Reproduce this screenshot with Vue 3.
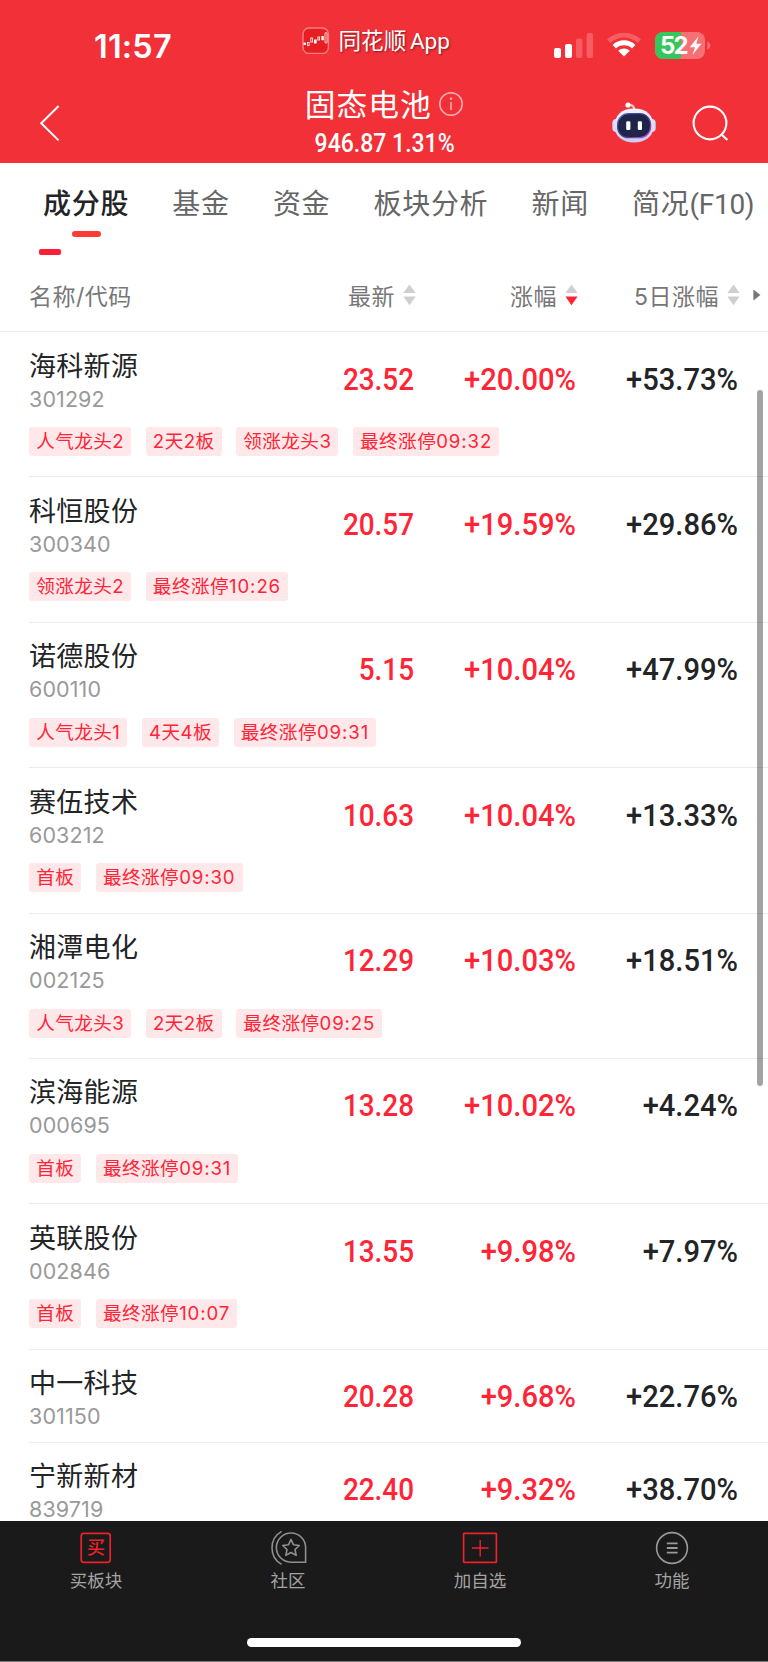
<template>
  <div class="app">
    <header class="header">
      <div class="status-bar">
        <span class="time">11:57</span>
        <div class="source-app">
          <svg class="app-icon" width="28" height="28" viewBox="0 0 28 28">
            <rect x="1" y="1" width="25.4" height="25.4" rx="6" fill="#e51f22" stroke="#f77e80" stroke-width="1.4" />
            <g fill="#fff">
              <rect x="1.5" y="15.6" width="2.4" height="2.4" />
              <rect x="12" y="12.5" width="2.6" height="4" />
              <rect x="19.4" y="9" width="2.4" height="4.2" />
            </g>
            <g fill="none" stroke="#fff" stroke-width="0.8">
              <rect x="5.4" y="15.4" width="1.8" height="3" />
              <rect x="8.8" y="11" width="1.8" height="4" />
              <rect x="15.8" y="10" width="1.8" height="3" />
              <rect x="23" y="5.6" width="2" height="10.5" rx="1" />
            </g>
          </svg>
          <span class="source-name">同花顺 App</span>
        </div>
        <div class="status-icons">
          <svg width="40" height="28" viewBox="0 0 40 28">
            <rect x="0" y="16" width="7" height="10" rx="2" fill="#fff" />
            <rect x="11" y="12" width="7" height="14" rx="2" fill="#fff" />
            <rect x="22" y="6.5" width="6.4" height="19.5" rx="2" fill="#fff" opacity="0.22" />
            <rect x="32.6" y="1" width="6.4" height="25" rx="2" fill="#fff" opacity="0.22" />
          </svg>
          <svg class="wifi" width="34" height="26" viewBox="0 0 34 26">
            <path d="M0 7.6 A24.5 24.5 0 0 1 34 7.6 L30.6 11 A19.5 19.5 0 0 0 3.4 11 Z" fill="#fff" opacity="0.22" />
            <path d="M5.6 13 A16.3 16.3 0 0 1 28.4 13 L25 16.4 A11.5 11.5 0 0 0 9 16.4 Z" fill="#fff" />
            <path d="M11.2 18.8 A8.4 8.4 0 0 1 22.8 18.8 L17 24.6 Z" fill="#fff" />
          </svg>
          <svg class="battery" width="56" height="28" viewBox="0 0 56 28">
            <defs>
              <clipPath id="battery-body"><rect width="50" height="27" rx="8" /></clipPath>
            </defs>
            <g clip-path="url(#battery-body)">
              <rect width="50" height="27" fill="#f67175" />
              <rect width="26" height="27" fill="#34c759" />
            </g>
            <path d="M52.4 9.6 Q55.4 11 55.4 13.5 T52.4 17.6 Z" fill="#f67175" />
            <text x="5" y="21.8" textLength="28.5" class="battery-text">52</text>
            <path d="M43.5 4.3 L34.8 15.2 H40 L37.6 22.8 L46.4 11.8 H41.2 Z" fill="#fff" />
          </svg>
        </div>
      </div>
      <div class="nav-bar">
        <svg class="back" width="22" height="38" viewBox="0 0 22 38">
          <path d="M19.6 2 L2.2 19.2 L19.6 36.4" fill="none" stroke="#fff" stroke-width="2" />
        </svg>
        <div class="title">
          <div class="title-row">
            <span class="name">固态电池</span>
            <svg width="26" height="26" viewBox="0 0 26 26">
              <circle cx="13" cy="13" r="11.2" fill="none" stroke="#fab0b2" stroke-width="1.5" />
              <circle cx="13" cy="7.8" r="1.2" fill="#fab0b2" />
              <path d="M13 11 V19" stroke="#fab0b2" stroke-width="1.6" />
            </svg>
          </div>
          <div class="quote">946.87 1.31%</div>
        </div>
        <div class="nav-actions">
          <svg width="44" height="42" viewBox="0 0 44 42">
            <defs>
              <linearGradient id="shell" x1="0" y1="0" x2="0" y2="1">
                <stop offset="0" stop-color="#f3f2fd" />
                <stop offset="1" stop-color="#cccbf2" />
              </linearGradient>
              <linearGradient id="ring" x1="0" y1="0" x2="1" y2="1">
                <stop offset="0" stop-color="#4a63c8" />
                <stop offset="0.5" stop-color="#39357c" />
                <stop offset="1" stop-color="#c653e6" />
              </linearGradient>
            </defs>
            <path d="M16.5 2.6 Q22 2.6 22.4 8" fill="none" stroke="#f7bfcb" stroke-width="2.2" />
            <circle cx="16" cy="3" r="2.6" fill="#fff" />
            <rect x="0.3" y="17" width="8" height="13" rx="4" fill="#d5daf6" />
            <rect x="35.7" y="17" width="8" height="13" rx="4" fill="#d5daf6" />
            <path d="M22 6.6 C35 6.6 41.5 14 41.5 24 C41.5 35 33 40.4 22 40.4 C11 40.4 2.5 35 2.5 24 C2.5 14 9 6.6 22 6.6 Z" fill="url(#shell)" />
            <rect x="5.6" y="11.7" width="33" height="24" rx="11" fill="#1f2548" stroke="url(#ring)" stroke-width="1.3" />
            <rect x="14.2" y="19.2" width="4.2" height="8.8" rx="1.3" fill="#fff" />
            <rect x="25.8" y="19.2" width="4.2" height="8.8" rx="1.3" fill="#fff" />
          </svg>
          <svg width="38" height="38" viewBox="0 0 38 38">
            <circle cx="18" cy="18" r="16.4" fill="none" stroke="#fff" stroke-width="2.1" />
            <path d="M29 29 L35.4 35" stroke="#fff" stroke-width="2.3" />
          </svg>
        </div>
      </div>
    </header>

    <nav class="tabs">
      <span v-for="(tab, index) in tabs" :key="tab.label" class="tab" :class="{ active: index === 0 }">
        {{ tab.label }}<span v-if="tab.suffix" class="suffix">{{ tab.suffix }}</span>
      </span>
    </nav>
    <div class="sub-indicator"></div>

    <div class="table-head">
      <span class="head-name">名称/代码</span>
      <div v-for="col in columns" :key="col.label" class="head-cell">
        <span>{{ col.label }}</span>
        <svg width="13" height="22" viewBox="0 0 13 22">
          <path d="M6.5 0.6 L12.6 9 H0.4 Z" fill="#cfcfcf" />
          <path d="M6.5 21.2 L12.6 12.6 H0.4 Z" :fill="col.desc ? '#ff2436' : '#cfcfcf'" />
        </svg>
      </div>
      <svg class="more" width="8" height="12" viewBox="0 0 8 12">
        <path d="M0.4 0.6 L7.4 6 L0.4 11.4 Z" fill="#777" />
      </svg>
    </div>

    <main class="list">
      <div v-for="stock in stocks" :key="stock.code" class="row">
        <div class="row-main">
          <div class="stock">
            <div class="stock-name">{{ stock.name }}</div>
            <div class="stock-code">{{ stock.code }}</div>
          </div>
          <div class="num price red">{{ stock.price }}</div>
          <div class="num red">{{ stock.change }}</div>
          <div class="num">{{ stock.change5 }}</div>
        </div>
        <div v-if="stock.tags" class="tags">
          <span v-for="tag in stock.tags" :key="tag" class="tag">{{ tag }}</span>
          <span class="tag">最终涨停<span class="limit-time">{{ stock.limitTime }}</span></span>
        </div>
      </div>
      <div class="scrollbar"></div>
    </main>

    <footer class="footer">
      <div class="footer-items">
        <div class="footer-item">
          <svg width="38" height="36" viewBox="0 0 38 36">
            <rect x="4.2" y="3.4" width="29" height="29" rx="2.6" fill="none" stroke="#ee2128" stroke-width="1.7" />
            <text x="18.9" y="24.4" text-anchor="middle" class="buy-text">买</text>
          </svg>
          <span>买板块</span>
        </div>
        <div class="footer-item">
          <svg width="38" height="36" viewBox="0 0 38 36">
            <g fill="none" stroke="#8f8f8f" stroke-width="1.6">
              <path d="M12.6 1.4 A19 19 0 0 0 12.6 34.4" />
              <path d="M36.6 32.2 H21.8 A14.6 14.6 0 1 1 36.6 17.6 Z" />
              <path d="M22 9.4 L24.5 14.8 L30.3 15.5 L26 19.5 L27.2 25.3 L22 22.5 L16.8 25.3 L18 19.5 L13.7 15.5 L19.5 14.8 Z" stroke-linejoin="round" />
            </g>
          </svg>
          <span>社区</span>
        </div>
        <div class="footer-item">
          <svg width="38" height="36" viewBox="0 0 38 36">
            <g fill="none" stroke="#ee2128" stroke-width="1.7">
              <rect x="2.6" y="3.4" width="32.8" height="29" rx="0.6" />
              <path d="M11 18 H27.4 M19.2 10 V26.4" stroke-width="1.4" />
            </g>
          </svg>
          <span>加自选</span>
        </div>
        <div class="footer-item">
          <svg width="38" height="36" viewBox="0 0 38 36">
            <circle cx="19" cy="18" r="15.4" fill="none" stroke="#9a9a9a" stroke-width="1.6" />
            <path d="M13.8 13.3 H24.6 M13.8 18 H24.6 M13.8 22.7 H24.6" stroke="#9a9a9a" stroke-width="1.8" />
          </svg>
          <span>功能</span>
        </div>
      </div>
      <div class="home-indicator"></div>
    </footer>
  </div>
</template>

<script setup>
const tabs = [
  { label: "成分股" },
  { label: "基金" },
  { label: "资金" },
  { label: "板块分析" },
  { label: "新闻" },
  { label: "简况", suffix: "(F10)" },
];

const columns = [
  { label: "最新", desc: false },
  { label: "涨幅", desc: true },
  { label: "5日涨幅", desc: false },
];

const stocks = [
  {
    name: "海科新源",
    code: "301292",
    price: "23.52",
    change: "+20.00%",
    change5: "+53.73%",
    tags: ["人气龙头2", "2天2板", "领涨龙头3"],
    limitTime: "09:32",
  },
  {
    name: "科恒股份",
    code: "300340",
    price: "20.57",
    change: "+19.59%",
    change5: "+29.86%",
    tags: ["领涨龙头2"],
    limitTime: "10:26",
  },
  {
    name: "诺德股份",
    code: "600110",
    price: "5.15",
    change: "+10.04%",
    change5: "+47.99%",
    tags: ["人气龙头1", "4天4板"],
    limitTime: "09:31",
  },
  {
    name: "赛伍技术",
    code: "603212",
    price: "10.63",
    change: "+10.04%",
    change5: "+13.33%",
    tags: ["首板"],
    limitTime: "09:30",
  },
  {
    name: "湘潭电化",
    code: "002125",
    price: "12.29",
    change: "+10.03%",
    change5: "+18.51%",
    tags: ["人气龙头3", "2天2板"],
    limitTime: "09:25",
  },
  {
    name: "滨海能源",
    code: "000695",
    price: "13.28",
    change: "+10.02%",
    change5: "+4.24%",
    tags: ["首板"],
    limitTime: "09:31",
  },
  {
    name: "英联股份",
    code: "002846",
    price: "13.55",
    change: "+9.98%",
    change5: "+7.97%",
    tags: ["首板"],
    limitTime: "10:07",
  },
  { name: "中一科技", code: "301150", price: "20.28", change: "+9.68%", change5: "+22.76%" },
  { name: "宁新新材", code: "839719", price: "22.40", change: "+9.32%", change5: "+38.70%" },
];
</script>

<style>
body {
  margin: 0;
}
</style>

<style scoped>
.app {
  width: 768px;
  height: 1662px;
  display: flex;
  flex-direction: column;
  overflow: hidden;
  background: #fff;
  color: #222426;
  font-family: Inter, "Noto Sans CJK SC", sans-serif;
  white-space: nowrap;
}

.app svg {
  display: block;
  flex: none;
}

.header {
  height: 163px;
  flex: none;
  background: #f23038;
  color: #fff;
}

.status-bar {
  height: 76px;
  box-sizing: border-box;
  padding: 27px 57px 0 94px;
  display: grid;
  grid-template-columns: 207.5px 1fr auto;
  align-items: start;
}

.time {
  font-size: 32.4px;
  line-height: 39px;
  font-weight: 600;
  letter-spacing: 0.2px;
}

.source-app {
  display: flex;
  align-items: flex-start;
  gap: 9px;
  font-family: Roboto, "Noto Sans CJK SC", sans-serif;
  font-size: 22.6px;
  line-height: 29px;
  text-shadow: 1px 1px 2px rgba(0, 0, 0, 0.45);
}

.source-name {
  word-spacing: -2px;
}

.status-icons {
  display: flex;
  align-items: flex-start;
  padding-top: 5px;
}

.wifi {
  margin-left: 13px;
}

.battery {
  margin-left: 14px;
}

.battery-text {
  fill: #fff;
  font-size: 24px;
  font-weight: 700;
}

.nav-bar {
  height: 87px;
  display: grid;
  grid-template-columns: 1fr auto 1fr;
  padding: 0 38.5px 0 39px;
}

.back {
  margin-top: 28px;
}

.title-row {
  display: flex;
  align-items: center;
  gap: 6px;
  height: 56px;
}

.name {
  font-size: 30.8px;
  letter-spacing: 1px;
  margin-top: -4px;
}

.quote {
  height: 24px;
  line-height: 24px;
  font-family: Roboto, sans-serif;
  font-size: 25px;
  font-weight: 500;
  text-align: center;
  transform: scaleX(0.92);
}

.nav-actions {
  display: flex;
  justify-content: flex-end;
  gap: 36px;
  padding-top: 26px;
}

.nav-actions svg:last-child {
  margin-top: 3px;
}

.tabs {
  flex: none;
  height: 82px;
  display: flex;
  gap: 43.2px;
  padding-left: 43px;
  color: #666;
  font-family: Roboto, "Noto Sans CJK SC", sans-serif;
  font-size: 28px;
  line-height: 83px;
  letter-spacing: 0.7px;
}

.tab.active {
  position: relative;
  color: #222426;
  font-weight: 500;
}

.tab.active::after {
  content: "";
  position: absolute;
  left: 29px;
  top: 68px;
  width: 29px;
  height: 6px;
  border-radius: 3px;
  background: #fd3b33;
}

.suffix {
  letter-spacing: -0.3px;
}

.sub-indicator {
  flex: none;
  width: 22px;
  height: 6px;
  margin: 4px 0 0 38.5px;
  border-radius: 2px;
  background: #ff1f35;
}

.table-head {
  flex: none;
  height: 72px;
  padding: 4px 7px 0 29px;
  display: grid;
  grid-template-columns: 1fr 162px 162px 162px 21.5px;
  align-items: center;
  border-bottom: 1px solid #ececec;
  color: #777;
  font-size: 23px;
  letter-spacing: 0.5px;
}

.head-cell {
  display: flex;
  justify-content: flex-end;
  align-items: center;
  gap: 7.5px;
}

.more {
  justify-self: end;
}

.list {
  position: relative;
  flex: 1;
  min-height: 0;
  overflow: hidden;
}

.row {
  margin-left: 29px;
  padding-right: 30px;
  border-bottom: 1px solid #ececec;
}

.row-main {
  height: 92px;
  display: grid;
  grid-template-columns: 1fr 130px 162px 162px;
  align-items: center;
}

.stock-name {
  font-size: 27px;
  line-height: 37px;
  letter-spacing: 0.3px;
  padding-top: 4px;
}

.stock-code {
  color: #999;
  font-size: 21.5px;
  line-height: 28px;
  letter-spacing: 0.1px;
}

.num {
  padding-top: 1px;
  font-family: Roboto, sans-serif;
  font-size: 32px;
  font-weight: 500;
  text-align: right;
  transform: scaleX(0.91);
  transform-origin: right;
}

.num.price {
  transform: scaleX(0.87);
}

.red {
  color: #ff2436;
}

.tags {
  display: flex;
  gap: 14.5px;
  padding: 3px 0 20.4px;
}

.tag {
  height: 29px;
  padding: 0 7px 0 7.2px;
  border-radius: 3px;
  background: #ffe8ea;
  color: #ff2436;
  font-size: 18.6px;
  line-height: 29px;
  letter-spacing: 0.45px;
}

.limit-time {
  letter-spacing: 0.9px;
}

.scrollbar {
  position: absolute;
  right: 5.5px;
  top: 58px;
  width: 5.5px;
  height: 696px;
  border-radius: 3px;
  background: rgba(0, 0, 0, 0.36);
}

.footer {
  flex: none;
  height: 141px;
  box-sizing: border-box;
  border-bottom: 1px solid #777;
  background: #1a1a1a;
  color: #a3a3a3;
}

.footer-items {
  display: grid;
  grid-template-columns: repeat(4, 1fr);
  height: 117px;
}

.footer-item {
  display: flex;
  flex-direction: column;
  align-items: center;
  padding-top: 9px;
  font-size: 17.5px;
  line-height: 30px;
}

.buy-text {
  fill: #ee2128;
  font-size: 18px;
  font-weight: 500;
}

.home-indicator {
  width: 274px;
  height: 9px;
  margin: 0 auto;
  border-radius: 5px;
  background: #fff;
}
</style>
